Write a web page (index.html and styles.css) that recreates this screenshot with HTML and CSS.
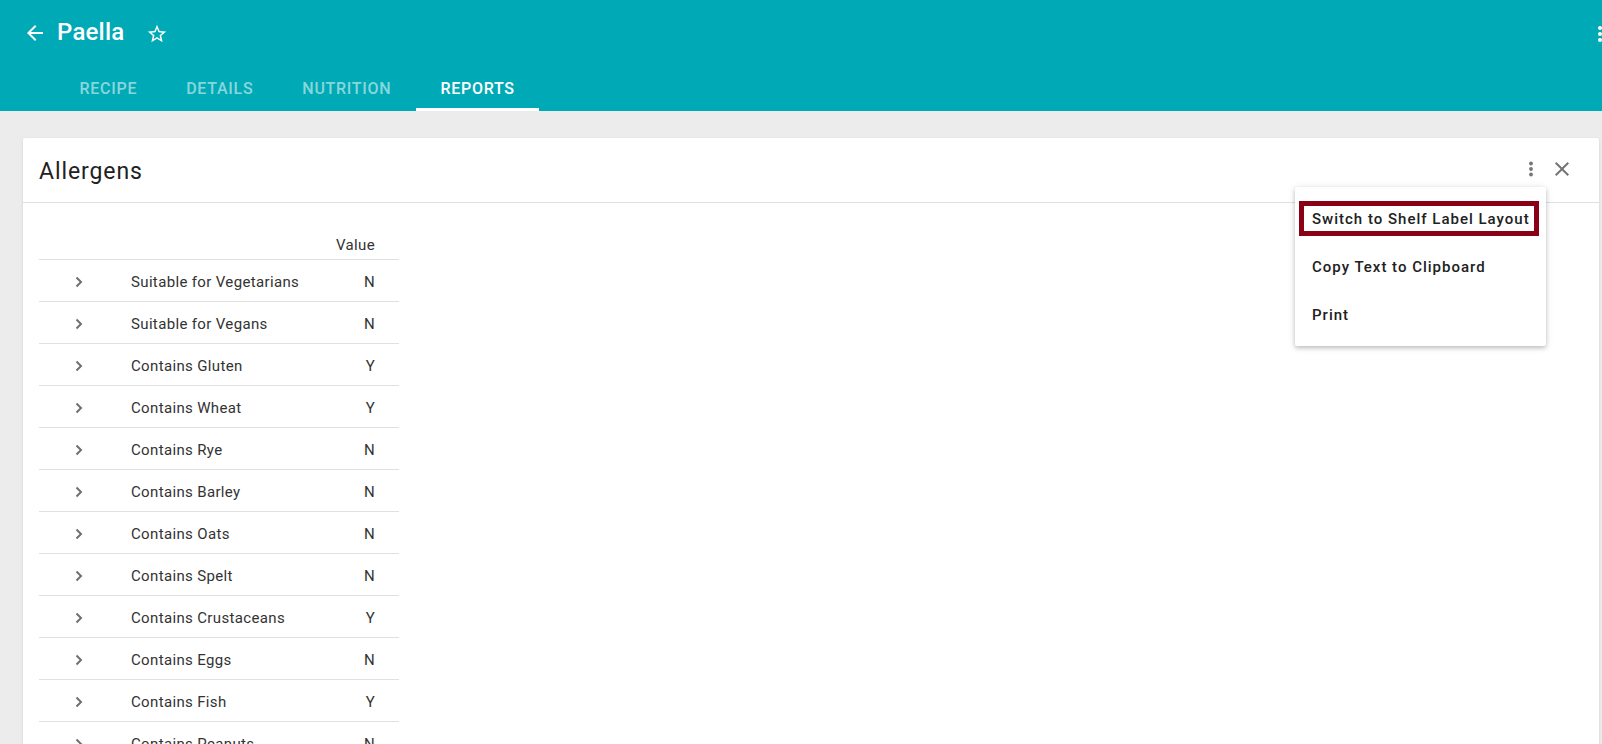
FILE: index.html
```html
<!DOCTYPE html>
<html lang="en">
<head>
<meta charset="utf-8">
<title>Paella - Reports</title>
<link rel="stylesheet" href="styles.css">
</head>
<body>
<header class="appbar">
  <div class="toolbar">
    <svg class="icon back" viewBox="0 0 24 24" width="24" height="24"><path d="M20 11H7.83l5.59-5.59L12 4l-8 8 8 8 1.41-1.41L7.83 13H20v-2z" fill="#fff"/></svg>
    <h1 class="title">Paella</h1>
    <svg class="icon star" viewBox="0 0 24 24" width="22" height="22"><path d="M22 9.24l-7.19-.62L12 2 9.19 8.630 2 9.24l5.46 4.73L5.82 21 12 17.27 18.18 21l-1.63-7.03L22 9.24zM12 15.4l-3.76 2.27 1-4.28-3.32-2.88 4.38-.38L12 6.1l1.71 4.04 4.38.38-3.32 2.88 1 4.28L12 15.4z" fill="#fff"/></svg>
    <div class="spacer"></div>
    <svg class="icon topmore" viewBox="0 0 24 24" width="24" height="24"><circle cx="12" cy="6" r="2" fill="#fff"/><circle cx="12" cy="12" r="2" fill="#fff"/><circle cx="12" cy="18" r="2" fill="#fff"/></svg>
  </div>
  <nav class="tabs">
    <div class="tab">RECIPE</div>
    <div class="tab">DETAILS</div>
    <div class="tab">NUTRITION</div>
    <div class="tab active">REPORTS</div>
  </nav>
</header>
<main class="content">
  <section class="card">
    <div class="card-head">
      <h2 class="card-title">Allergens</h2>
      <div class="actions">
        <svg class="icon" viewBox="0 0 24 24" width="24" height="24"><circle cx="12" cy="6.5" r="1.9" fill="#757575"/><circle cx="12" cy="12" r="1.9" fill="#757575"/><circle cx="12" cy="17.5" r="1.9" fill="#757575"/></svg>
        <svg class="icon" viewBox="0 0 24 24" width="24" height="24"><path d="M19 6.41L17.59 5 12 10.590 6.41 5 5 6.41 10.59 12 5 17.59 6.41 19 12 13.41 17.59 19 19 17.59 13.41 12z" fill="#757575"/></svg>
      </div>
      <div class="menu">
        <div class="menu-item highlighted">Switch to Shelf Label Layout</div>
        <div class="menu-item">Copy Text to Clipboard</div>
        <div class="menu-item">Print</div>
      </div>
    </div>
    <div class="card-body">
      <div class="table">
        <div class="row head"><span></span><span></span><span class="val">Value</span></div>
        <div class="row"><span class="chev"><svg viewBox="0 0 8 12" width="8" height="12"><path d="M1.5 1.5L6 6l-4.5 4.5" stroke="#6f6f6f" stroke-width="2" fill="none"/></svg></span><span class="label">Suitable for Vegetarians</span><span class="val">N</span></div>
        <div class="row"><span class="chev"><svg viewBox="0 0 8 12" width="8" height="12"><path d="M1.5 1.5L6 6l-4.5 4.5" stroke="#6f6f6f" stroke-width="2" fill="none"/></svg></span><span class="label">Suitable for Vegans</span><span class="val">N</span></div>
        <div class="row"><span class="chev"><svg viewBox="0 0 8 12" width="8" height="12"><path d="M1.5 1.5L6 6l-4.5 4.5" stroke="#6f6f6f" stroke-width="2" fill="none"/></svg></span><span class="label">Contains Gluten</span><span class="val">Y</span></div>
        <div class="row"><span class="chev"><svg viewBox="0 0 8 12" width="8" height="12"><path d="M1.5 1.5L6 6l-4.5 4.5" stroke="#6f6f6f" stroke-width="2" fill="none"/></svg></span><span class="label">Contains Wheat</span><span class="val">Y</span></div>
        <div class="row"><span class="chev"><svg viewBox="0 0 8 12" width="8" height="12"><path d="M1.5 1.5L6 6l-4.5 4.5" stroke="#6f6f6f" stroke-width="2" fill="none"/></svg></span><span class="label">Contains Rye</span><span class="val">N</span></div>
        <div class="row"><span class="chev"><svg viewBox="0 0 8 12" width="8" height="12"><path d="M1.5 1.5L6 6l-4.5 4.5" stroke="#6f6f6f" stroke-width="2" fill="none"/></svg></span><span class="label">Contains Barley</span><span class="val">N</span></div>
        <div class="row"><span class="chev"><svg viewBox="0 0 8 12" width="8" height="12"><path d="M1.5 1.5L6 6l-4.5 4.5" stroke="#6f6f6f" stroke-width="2" fill="none"/></svg></span><span class="label">Contains Oats</span><span class="val">N</span></div>
        <div class="row"><span class="chev"><svg viewBox="0 0 8 12" width="8" height="12"><path d="M1.5 1.5L6 6l-4.5 4.5" stroke="#6f6f6f" stroke-width="2" fill="none"/></svg></span><span class="label">Contains Spelt</span><span class="val">N</span></div>
        <div class="row"><span class="chev"><svg viewBox="0 0 8 12" width="8" height="12"><path d="M1.5 1.5L6 6l-4.5 4.5" stroke="#6f6f6f" stroke-width="2" fill="none"/></svg></span><span class="label">Contains Crustaceans</span><span class="val">Y</span></div>
        <div class="row"><span class="chev"><svg viewBox="0 0 8 12" width="8" height="12"><path d="M1.5 1.5L6 6l-4.5 4.5" stroke="#6f6f6f" stroke-width="2" fill="none"/></svg></span><span class="label">Contains Eggs</span><span class="val">N</span></div>
        <div class="row"><span class="chev"><svg viewBox="0 0 8 12" width="8" height="12"><path d="M1.5 1.5L6 6l-4.5 4.5" stroke="#6f6f6f" stroke-width="2" fill="none"/></svg></span><span class="label">Contains Fish</span><span class="val">Y</span></div>
        <div class="row"><span class="chev"><svg viewBox="0 0 8 12" width="8" height="12"><path d="M1.5 1.5L6 6l-4.5 4.5" stroke="#6f6f6f" stroke-width="2" fill="none"/></svg></span><span class="label">Contains Peanuts</span><span class="val">N</span></div>
      </div>
    </div>
  </section>
</main>
</body>
</html>
```

FILE: styles.css
```css
html, body {
  margin: 0;
  padding: 0;
}
body {
  background: #ececec;
  font-family: Roboto, "Noto Sans", "Liberation Sans", sans-serif;
  color: #212121;
  overflow: hidden;
  height: 744px;
}
.appbar {
  background: #00a9b6;
  height: 111px;
  overflow: hidden;
  color: #fff;
}
.toolbar {
  height: 64px;
  display: flex;
  align-items: center;
  padding-left: 23px;
}
.icon {
  display: block;
  flex: none;
}
.back {
  margin-top: 2px;
}
.title {
  margin: 0 0 0 10px;
  font-size: 24px;
  font-weight: 500;
  letter-spacing: 0.2px;
  line-height: 32px;
}
.star {
  margin-left: 22px;
  margin-top: 4px;
}
.spacer {
  flex: 1;
}
.topmore {
  margin-right: -10px;
  margin-top: 4px;
}
.tabs {
  display: flex;
  height: 47px;
  padding-left: 55px;
}
.tab {
  padding: 5px 24.5px 0;
  display: flex;
  align-items: center;
  box-sizing: border-box;
  font-size: 16px;
  font-weight: 500;
  letter-spacing: 0.72px;
  color: rgba(255, 255, 255, 0.55);
  border-bottom: 3px solid transparent;
}
.tab.active {
  color: #fff;
  border-bottom-color: #fff;
}
.content {
  padding: 27px 3px 0 23px;
}
.card {
  background: #fff;
  border-radius: 2px;
  box-shadow: 0 1px 3px rgba(0, 0, 0, 0.12);
  min-height: 700px;
}
.card-head {
  position: relative;
  height: 64px;
  border-bottom: 1px solid #e0e0e0;
  display: flex;
  align-items: center;
  padding: 0 25px 0 16px;
}
.card-title {
  margin: 0;
  flex: 1;
  font-size: 23px;
  font-weight: 400;
  letter-spacing: 0.9px;
  color: #212121;
  padding-top: 3px;
}
.actions {
  display: flex;
  gap: 7px;
  margin-top: -3px;
}
.menu {
  position: absolute;
  top: 49px;
  right: 53px;
  width: 251px;
  background: #fff;
  padding: 8px 0 7px;
  box-shadow: 0 2px 4px rgba(0, 0, 0, 0.2), 0 1px 8px rgba(0, 0, 0, 0.1);
  border-radius: 2px;
  z-index: 5;
}
.menu-item {
  position: relative;
  height: 48px;
  display: flex;
  align-items: center;
  padding-left: 17px;
  font-size: 15px;
  font-weight: 500;
  letter-spacing: 1px;
  color: #212121;
}
.menu-item.highlighted::after {
  content: "";
  position: absolute;
  left: 4px;
  right: 7px;
  top: 6px;
  bottom: 7px;
  border: 5px solid #8a0014;
}
.card-body {
  padding: 0 16px;
}
.table {
  width: 360px;
}
.row {
  display: grid;
  grid-template-columns: 80px 1fr auto;
  align-items: center;
  height: 42px;
  box-sizing: border-box;
  padding-top: 2px;
  border-bottom: 1px solid #e0e0e0;
  font-size: 15px;
  letter-spacing: 0.35px;
  color: #333;
}
.row.head {
  align-items: end;
  padding: 0 0 5px;
  height: 57px;
}
.chev {
  display: flex;
  justify-content: center;
}
.chev svg {
  display: block;
}
.label {
  padding-left: 12px;
}
.val {
  padding-right: 24px;
  text-align: right;
}
```
